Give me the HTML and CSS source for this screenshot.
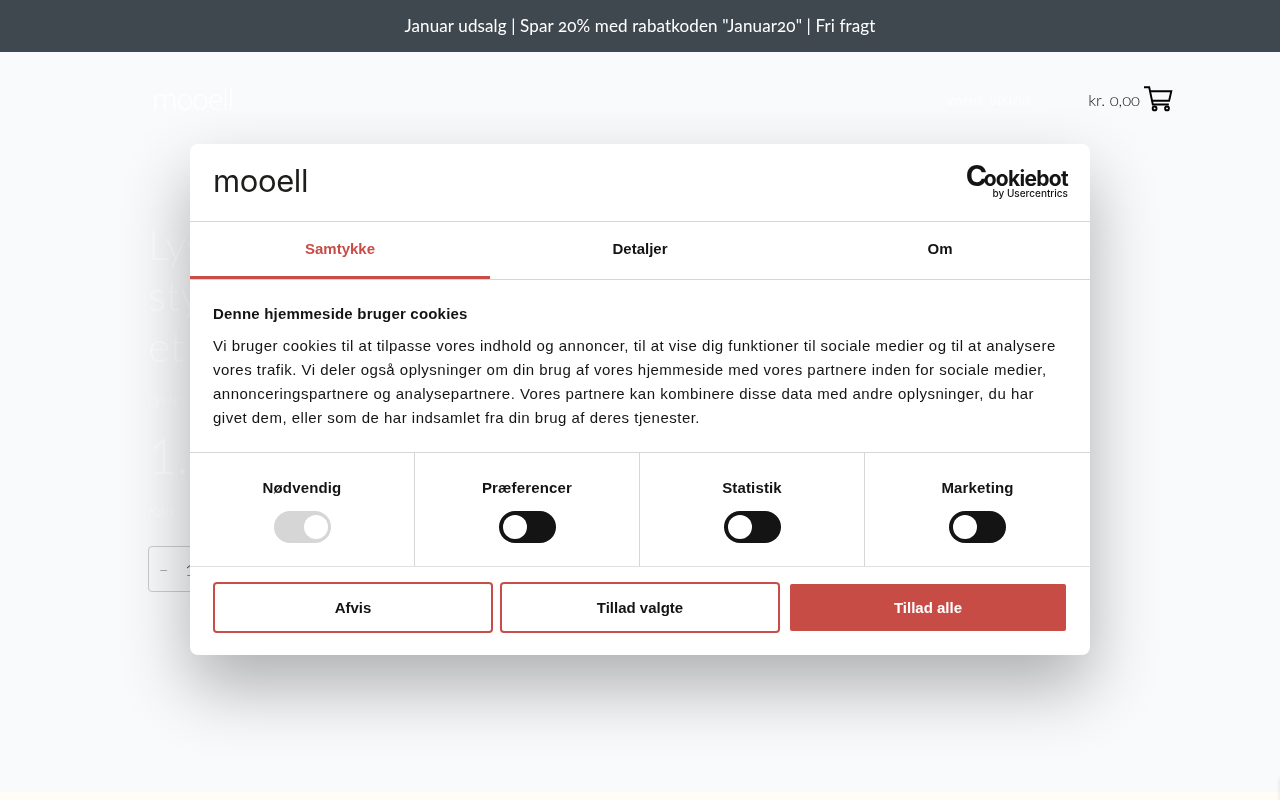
FILE: index.html
```html
<!DOCTYPE html>
<html lang="da">
<head>
<meta charset="utf-8">
<title>mooell</title>
<link rel="stylesheet" href="styles.css">
</head>
<body>
<div class="page">
  <div class="announce">Januar udsalg | Spar 20% med rabatkoden "Januar20" | Fri fragt</div>
  <header class="site-header">
    <span class="site-logo">mooell</span>
    <nav class="site-nav">vores vision</nav>
    <div class="cart">
      <span class="cart-total">kr. 0,00</span>
      <svg class="cart-icon" viewBox="0 0 30 26" width="30" height="26" fill="none" stroke="#000" stroke-width="1.9">
        <path d="M1 1.2h5.2l3.6 17.3h16"/>
        <path d="M6.9 5.2h21.4l-2.2 9.6H9.1"/>
        <circle cx="11.6" cy="22.4" r="1.9"/>
        <circle cx="24" cy="22.4" r="1.9"/>
      </svg>
    </div>
  </header>
  <main class="product">
    <h1 class="product-title">Lys<br>sty<br>et</h1>
    <p class="product-sub">Lyste</p>
    <p class="product-price">1.4</p>
    <p class="product-note">Køb</p>
    <div class="qty"><span class="qty-minus">−</span><span class="qty-value">1</span></div>
  </main>
</div>
<div class="footer-band"></div>
<div class="edge-widget"></div>

<section class="dialog">
  <div class="dialog-top">
    <span class="brand">mooell</span>
    <div class="cookiebot">
      <span class="cookiebot-name"><span class="cookiebot-c">C</span>ookiebot</span>
      <span class="cookiebot-by">by Usercentrics</span>
    </div>
  </div>
  <div class="tabs">
    <div class="tab tab-active">Samtykke</div>
    <div class="tab">Detaljer</div>
    <div class="tab">Om</div>
  </div>
  <div class="body">
    <h2 class="body-title">Denne hjemmeside bruger cookies</h2>
    <p class="body-text">Vi bruger cookies til at tilpasse vores indhold og annoncer, til at vise dig funktioner til sociale medier og til at analysere vores trafik. Vi deler også oplysninger om din brug af vores hjemmeside med vores partnere inden for sociale medier, annonceringspartnere og analysepartnere. Vores partnere kan kombinere disse data med andre oplysninger, du har givet dem, eller som de har indsamlet fra din brug af deres tjenester.</p>
  </div>
  <div class="toggles">
    <div class="toggle-cell"><strong class="toggle-label">Nødvendig</strong><span class="switch switch-locked"><span class="knob"></span></span></div>
    <div class="toggle-cell"><strong class="toggle-label">Præferencer</strong><span class="switch"><span class="knob"></span></span></div>
    <div class="toggle-cell"><strong class="toggle-label">Statistik</strong><span class="switch"><span class="knob"></span></span></div>
    <div class="toggle-cell"><strong class="toggle-label">Marketing</strong><span class="switch"><span class="knob"></span></span></div>
  </div>
  <div class="actions">
    <button class="btn btn-outline">Afvis</button>
    <button class="btn btn-outline">Tillad valgte</button>
    <button class="btn btn-fill">Tillad alle</button>
  </div>
</section>
</body>
</html>
```
FILE: styles.css
```css
* { box-sizing: border-box; }
html, body { margin: 0; height: 100%; }
body {
  background: #f9fafc;
  font-family: "Lato", "Liberation Sans", sans-serif;
  overflow: hidden;
  display: flex;
  flex-direction: column;
}
.page { flex: 1; min-height: 0; overflow: hidden; will-change: transform; }
.footer-band { height: 8px; background: #fffdf5; flex: none; }
.edge-widget {
  position: fixed;
  right: -20px;
  bottom: -10px;
  width: 20px;
  height: 34px;
  border-radius: 6px;
  box-shadow: 0 0 4px rgba(0,0,0,.12);
}

.announce {
  height: 52px;
  background: #40484f;
  color: #fff;
  display: flex;
  align-items: center;
  justify-content: center;
  font-size: 17px;
  font-weight: 400;
  letter-spacing: .13px;
  font-variant-numeric: oldstyle-nums;
  padding-bottom: 1px;
}
.site-header {
  height: 96px;
  margin: 0 108px 0 152px;
  display: flex;
  align-items: center;
}
.site-logo {
  color: #fff;
  font-family: "Open Sans", sans-serif;
  font-weight: 300;
  font-size: 29px;
  letter-spacing: -1.3px;
  margin-top: -3px;
}
.site-nav {
  color: #fff;
  font-size: 15px;
  font-weight: 300;
  letter-spacing: .8px;
  margin-left: auto;
  margin-right: 56px;
}
.cart { display: flex; align-items: center; gap: 3px; position: relative; left: 1px; }
.cart-total {
  font-size: 16.5px;
  font-weight: 300;
  color: #111;
  font-variant-numeric: oldstyle-nums;
}
.cart-icon { margin-top: -2px; }

.product { padding: 71px 0 0 148px; color: #fff; font-weight: 300; }
.product-title { margin: 0; font-size: 42px; line-height: 51px; font-weight: 300; }
.product-sub { margin: 15px 0 0; font-size: 16px; line-height: 24px; font-style: italic; }
.product-price { margin: 14px 0 0; font-size: 50px; line-height: 60px; font-weight: 300; }
.product-note { margin: 14px 0 0; font-size: 16px; line-height: 24px; font-style: italic; }
.qty {
  margin-top: 23px;
  width: 120px;
  height: 46px;
  border: 1px solid #ccc;
  border-radius: 4px;
  display: flex;
  align-items: center;
  gap: 17px;
  padding-left: 10px;
  color: #777;
}
.qty-value { color: #222; }

.dialog {
  position: fixed;
  left: 190px;
  top: 144px;
  width: 900px;
  height: 511px;
  background: #fff;
  border-radius: 8px;
  box-shadow: 0 32px 68px rgba(0,0,0,.3);
  color: #141414;
  font-family: "Liberation Sans", Arial, sans-serif;
  font-size: 15px;
  display: flex;
  flex-direction: column;
  overflow: hidden;
}
.dialog-top {
  height: 78px;
  flex: none;
  border-bottom: 1px solid #d6d6d6;
  display: flex;
  align-items: center;
  justify-content: space-between;
  padding: 0 22px 0 23px;
}
.brand {
  font-family: "Inter", sans-serif;
  font-weight: 400;
  font-size: 31px;
  letter-spacing: -.4px;
  color: #1d1d1b;
  margin-top: -4px;
}
.cookiebot {
  display: flex;
  flex-direction: column;
  align-items: flex-end;
  color: #141414;
  margin-top: -2px;
}
.cookiebot-name {
  font-family: "Inter", sans-serif;
  font-weight: 700;
  font-size: 21px;
  line-height: 19px;
  letter-spacing: -.7px;
}
.cookiebot-c { font-size: 29px; line-height: 19px; font-weight: 700; letter-spacing: -3.5px; }
.cookiebot-by {
  font-family: "Inter", sans-serif;
  font-size: 10px;
  line-height: 10px;
  font-weight: 500;
}
.tabs {
  height: 58px;
  flex: none;
  display: flex;
  border-bottom: 1px solid #d6d6d6;
}
.tab {
  flex: 1;
  display: flex;
  align-items: center;
  justify-content: center;
  font-weight: 700;
  padding-bottom: 4px;
}
.tab-active {
  color: #c94c46;
  box-shadow: inset 0 -3px 0 #c94c46;
}
.body { flex: none; height: 173px; padding: 24px 22px 0 23px; border-bottom: 1px solid #d6d6d6; }
.body-title { margin: 0 0 10px; font-size: 15px; line-height: 20px; font-weight: 700; letter-spacing: .2px; }
.body-text { margin: 0; line-height: 24px; letter-spacing: .49px; }
.toggles { flex: none; height: 114px; display: flex; border-bottom: 1px solid #e0e0e0; }
.toggle-cell {
  width: 225px;
  border-right: 1px solid #d6d6d6;
  display: flex;
  flex-direction: column;
  align-items: center;
  padding-top: 26px;
  gap: 14px;
}
.toggle-cell:last-child { border-right: 0; }
.toggle-label { font-size: 15px; line-height: 18px; letter-spacing: .15px; }
.switch {
  width: 57px;
  height: 32px;
  border-radius: 16px;
  background: #141414;
  display: flex;
  align-items: center;
  padding: 0 4px;
}
.knob { width: 24px; height: 24px; border-radius: 50%; background: #fff; }
.switch-locked { background: #d6d6d6; justify-content: flex-end; padding-right: 3px; }
.actions { flex: 1; display: flex; align-items: flex-start; gap: 7px; padding: 15px 23px 0 23px; }
.btn {
  height: 51px;
  width: 280px;
  font: 700 15px "Liberation Sans", Arial, sans-serif;
  border-radius: 4px;
  color: #141414;
  background: #fff;
  border: 2px solid #c94c46;
}
.btn-fill {
  margin: 2px 0 0 3px;
  height: 47px;
  width: 276px;
  background: #c84c46;
  color: #fff;
  border: 0;
  border-radius: 2px;
}
```
